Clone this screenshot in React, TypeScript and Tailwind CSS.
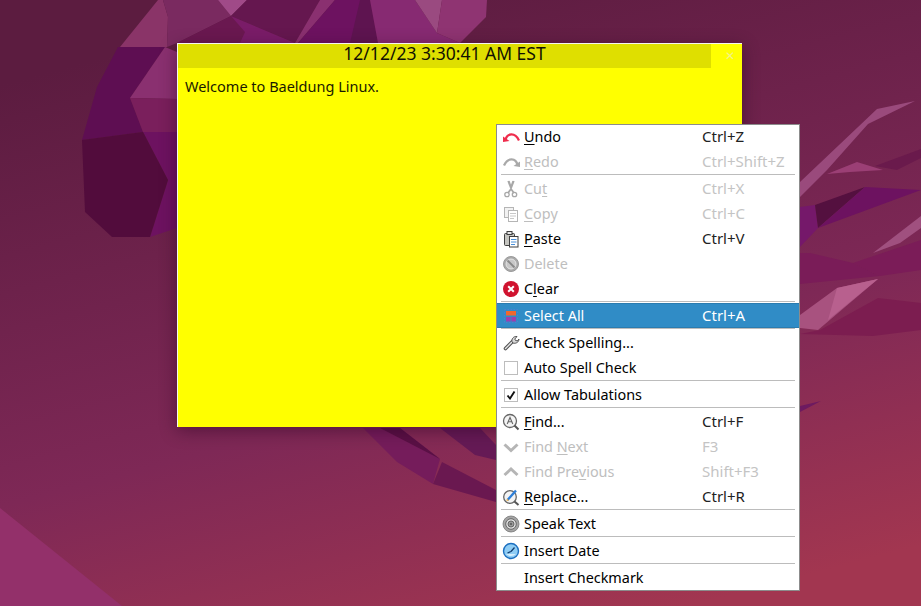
import type { ReactNode } from "react";

const polys: [string, string][] = [
  ["120,47 158,0 163,0 168,17 167,47", "#8a3468"],
  ["163,0 218,0 231,16 177,43 167,47 168,17", "#7a2a60"],
  ["218,0 247,0 231,16", "#a04a88"],
  ["247,0 320,0 295,43 231,16", "#65174f"],
  ["231,16 295,43 240,43", "#7a1c68"],
  ["231,16 245,32 240,43 177,43", "#6a1850"],
  ["320,0 335,0 298,43 295,43", "#8a3070"],
  ["335,0 370,0 378,43 298,43", "#6d1260"],
  ["360,0 370,0 378,43 350,43", "#5e1450"],
  ["370,0 415,0 437,33 460,43 378,43", "#872a72"],
  ["415,0 442,0 437,33", "#9a4a80"],
  ["442,0 487,0 486,17 460,43 437,33", "#8f3472"],
  ["118,47 165,47 130,98 143,132 82,140 97,87", "#5e0e52"],
  ["130,98 165,47 177,52 177,99", "#8a3070"],
  ["130,98 177,99 177,132 143,132", "#7a1f5c"],
  ["143,132 177,132 177,228 150,237 168,180", "#6d1260"],
  ["82,140 143,132 168,180 150,237 112,237 85,212", "#520c3c"],
  ["0,508 122,606 0,606", "#93306a"],
  ["363,428 400,428 440,459 433,484 397,462", "#751c5b"],
  ["380,428 400,428 440,459", "#5a1045"],
  ["433,484 442,462 496,490 496,502", "#6a1850"],
  ["440,428 480,428 496,445 496,460 475,455", "#651a55"],
  ["800,182 877,109 915,101 868,124 827,170 800,197", "#9a4a7c"],
  ["827,174 857,162 883,170 850,172", "#9b3f75"],
  ["875,166 921,149 921,158 897,170", "#6a1a4c"],
  ["800,207 815,205 818,228 800,247", "#75186a"],
  ["815,205 865,187 818,228", "#54103f"],
  ["865,187 921,190 818,228", "#6d1260"],
  ["810,253 853,263 880,276 800,284 800,253", "#7a1c58"],
  ["853,263 921,240 921,270 880,276", "#7b1c58"],
  ["873,253 921,216 921,228 900,243", "#a0507f"],
  ["800,334 873,336 921,330 921,303 878,298 820,330", "#7c1d50"],
  ["800,315 837,288 878,279 818,330 800,328", "#a8527f"],
  ["837,288 878,279 828,320", "#b8608e"],
  ["800,406 821,401 800,412", "#6d1a60"],
];

function Wallpaper() {
  return (
    <svg className="absolute inset-0" width="921" height="606" viewBox="0 0 921 606">
      <defs>
        <linearGradient id="wall" x1="0.35" y1="0" x2="0.75" y2="1">
          <stop offset="0" stopColor="#5c1c40" />
          <stop offset="0.6" stopColor="#7e2856" />
          <stop offset="1" stopColor="#a23650" />
        </linearGradient>
      </defs>
      <rect width="921" height="606" fill="url(#wall)" />
      {polys.map(([points, fill], i) => (
        <polygon key={i} points={points} fill={fill} />
      ))}
    </svg>
  );
}

const Ico = ({ children }: { children: ReactNode }) => (
  <svg width="18" height="18" viewBox="0 0 18 18" fill="none">
    {children}
  </svg>
);

const icons: Record<string, ReactNode> = {
  undo: (
    <Ico>
      <path d="M3.5 12C5 5 13 4 17 12.5" stroke="#ef2d4d" strokeWidth="2.3" />
      <path d="M1 8.5L1 14L7.5 13Z" fill="#ef2d4d" />
    </Ico>
  ),
  redo: (
    <Ico>
      <path d="M15.5 12C14 5 6 4 2 12.5" stroke="#a9a9a9" strokeWidth="2.3" />
      <path d="M18 8.5L18 14L11.5 13Z" fill="#a9a9a9" />
    </Ico>
  ),
  cut: (
    <Ico>
      <path d="M6 1L9 9L12 1M7 1L9.5 8M11 1L8.5 8" stroke="#a8a8a8" strokeWidth="1.3" />
      <path d="M9 9L6 13M9 9L12 13" stroke="#a8a8a8" strokeWidth="1.8" />
      <circle cx="5" cy="14.5" r="2.2" stroke="#a8a8a8" strokeWidth="1.3" />
      <circle cx="12.5" cy="14.5" r="2.2" stroke="#a8a8a8" strokeWidth="1.3" />
    </Ico>
  ),
  copy: (
    <Ico>
      <rect x="2.5" y="2.5" width="9" height="10" fill="#f2f2f2" stroke="#b5b5b5" />
      <rect x="6.5" y="5.5" width="9" height="11" fill="#fff" stroke="#b5b5b5" />
      <path d="M8 8.5H14M8 11H14M8 13.5H12" stroke="#c8c8c8" />
    </Ico>
  ),
  paste: (
    <Ico>
      <rect x="2.5" y="3.5" width="10" height="12" rx="1" fill="#c5c5c0" stroke="#3f3f3f" />
      <rect x="5" y="1.5" width="5" height="3" fill="#e8e8e8" stroke="#3f3f3f" />
      <rect x="7.5" y="6.5" width="8.5" height="10.5" fill="#fff" stroke="#3f3f3f" />
      <path d="M9 9.5H14.5M9 12H14.5M9 14.5H13" stroke="#4a90d9" />
    </Ico>
  ),
  del: (
    <Ico>
      <circle cx="9" cy="9" r="7.5" fill="#aaaaaa" stroke="#9a9a9a" />
      <circle cx="9" cy="9" r="5" fill="#c8c8c8" stroke="#eee" strokeWidth="0.8" />
      <path d="M5.5 5.5L12.5 12.5" stroke="#888" strokeWidth="1.8" />
    </Ico>
  ),
  clear: (
    <Ico>
      <circle cx="9" cy="9" r="8" fill="#d0132f" />
      <path d="M6.2 6.2L11.8 11.8M11.8 6.2L6.2 11.8" stroke="#fff" strokeWidth="2" />
    </Ico>
  ),
  selectAll: (
    <Ico>
      <rect x="2.5" y="2.5" width="13" height="13" stroke="#4d7fd0" strokeDasharray="1.5 1.5" />
      <rect x="4" y="4" width="10" height="4.5" fill="#f0682c" />
      <rect x="4" y="10" width="4.5" height="4.5" fill="#9a3fb0" />
      <rect x="9.5" y="10" width="4.5" height="4.5" fill="#9a3fb0" />
    </Ico>
  ),
  wrench: (
    <Ico>
      <path d="M3.5 14.5L11 7" stroke="#555" strokeWidth="3.6" strokeLinecap="round" />
      <path d="M3.5 14.5L11 7" stroke="#e6e6e6" strokeWidth="1.4" strokeLinecap="round" />
      <path d="M10 8C9.3 5 11.5 2 15 2.5L12.8 5L13.5 6.5L15.2 6.8L17 5C17 8 14 10 11 9Z" fill="#d8d8d8" stroke="#555" />
    </Ico>
  ),
  find: (
    <Ico>
      <circle cx="8" cy="8" r="6.5" fill="#f4f4f4" stroke="#666" strokeWidth="1.3" />
      <path d="M12.5 12.5L16.5 16.5" stroke="#555" strokeWidth="2" />
      <path d="M5.2 11L8 4.5L10.8 11M6.2 8.8H9.8" stroke="#666" strokeWidth="1.1" />
    </Ico>
  ),
  next: (
    <Ico>
      <path d="M2.5 6.5L9 12.5L15.5 6.5" stroke="#b5b5b5" strokeWidth="3" />
    </Ico>
  ),
  prev: (
    <Ico>
      <path d="M2.5 12L9 6L15.5 12" stroke="#b5b5b5" strokeWidth="3" />
    </Ico>
  ),
  replace: (
    <Ico>
      <circle cx="8" cy="9" r="6.3" fill="#f4f4f4" stroke="#666" strokeWidth="1.3" />
      <path d="M12.5 13.5L16.5 17" stroke="#555" strokeWidth="2" />
      <path d="M5.5 12L14 2.5" stroke="#2e7fd8" strokeWidth="2.4" />
      <path d="M5 10.5L7 12.5L4.5 13Z" fill="#f0b040" />
    </Ico>
  ),
  speak: (
    <Ico>
      <circle cx="9" cy="9" r="8" fill="#a5a5a5" stroke="#777" strokeWidth="0.8" />
      <circle cx="9" cy="9" r="5.3" fill="#ddd" stroke="#666" />
      <circle cx="9" cy="9" r="3" fill="#999" stroke="#666" />
      <circle cx="9" cy="9" r="1" fill="#555" />
    </Ico>
  ),
  date: (
    <Ico>
      <circle cx="9" cy="9" r="7.5" fill="#8fcdf5" stroke="#1c6fc0" strokeWidth="1.4" />
      <path d="M4 12A7 7 0 0 0 14 12Z" fill="#d6eefc" />
      <path d="M9 9.5L5.5 11M9 9.5L12.5 5.5" stroke="#123d70" strokeWidth="1.3" />
    </Ico>
  ),
  empty: <Ico>{null}</Ico>,
};

type Row = { icon: string; label: ReactNode; key?: string; off?: boolean; active?: boolean };

const U = ({ children }: { children: string }) => <span className="underline underline-offset-2">{children}</span>;

const groups: Row[][] = [
  [
    { icon: "undo", label: <><U>U</U>ndo</>, key: "Ctrl+Z" },
    { icon: "redo", label: <><U>R</U>edo</>, key: "Ctrl+Shift+Z", off: true },
  ],
  [
    { icon: "cut", label: <>Cu<U>t</U></>, key: "Ctrl+X", off: true },
    { icon: "copy", label: <><U>C</U>opy</>, key: "Ctrl+C", off: true },
    { icon: "paste", label: <><U>P</U>aste</>, key: "Ctrl+V" },
    { icon: "del", label: "Delete", off: true },
    { icon: "clear", label: <>C<U>l</U>ear</> },
  ],
  [{ icon: "selectAll", label: "Select All", key: "Ctrl+A", active: true }],
  [
    { icon: "wrench", label: "Check Spelling..." },
    { icon: "box", label: "Auto Spell Check" },
  ],
  [{ icon: "check", label: "Allow Tabulations" }],
  [
    { icon: "find", label: <><U>F</U>ind...</>, key: "Ctrl+F" },
    { icon: "next", label: <>Find <U>N</U>ext</>, key: "F3", off: true },
    { icon: "prev", label: <>Find Pre<U>v</U>ious</>, key: "Shift+F3", off: true },
    { icon: "replace", label: <><U>R</U>eplace...</>, key: "Ctrl+R" },
  ],
  [{ icon: "speak", label: "Speak Text" }],
  [{ icon: "date", label: "Insert Date" }],
  [{ icon: "empty", label: "Insert Checkmark" }],
];

function MenuRow({ row }: { row: Row }) {
  const tone = row.active
    ? "border-y border-[#2a7cb0] bg-[#308cc6] text-white"
    : row.off
      ? "text-[#bebebe]"
      : "text-[#000000]";
  return (
    <div className={`flex h-[25px] items-center pl-[5px] ${tone}`}>
      <div className="flex w-[22px] shrink-0 items-center justify-start">
        {row.icon === "box" || row.icon === "check" ? (
          <div className="ml-[2px] flex h-[14px] w-[14px] items-center justify-center border border-[#bdbdbd] bg-white">
            {row.icon === "check" && (
              <svg width="10" height="10" viewBox="0 0 10 10" fill="none">
                <path d="M1.5 5.5L4 8.5L8.5 1.5" stroke="#111" strokeWidth="1.9" />
              </svg>
            )}
          </div>
        ) : (
          icons[row.icon]
        )}
      </div>
      <div className="w-[178px] shrink-0 text-[14.4px]">{row.label}</div>
      <div className={`text-[15px] ${row.active ? "" : row.off ? "text-[#c4c4c4]" : "text-[#222222]"}`}>{row.key}</div>
    </div>
  );
}

export default function App() {
  return (
    <div className="relative h-[606px] w-[921px] overflow-hidden font-['Noto_Sans',sans-serif] text-[14px]">
      <Wallpaper />

      {/* note window */}
      <div className="absolute left-[177px] top-[43px] h-[384px] w-[565px] border-l border-t border-[#f4f4f0] bg-[#ffff00] shadow-[0_4px_16px_rgba(40,0,30,0.45)]">
        <div className="flex h-[24px] w-[533px] items-center justify-center bg-[#dfdf00] pb-[5px] text-[17.5px] text-[#111100]">
          12/12/23 3:30:41 AM EST
        </div>
        <span className="absolute right-[7px] top-[6px] text-[12px] leading-none text-[#f3f38a]">✕</span>
        <p className="ml-[7px] mt-[8px] text-[14.5px] text-[#1a1a00]">Welcome to Baeldung Linux.</p>
      </div>

      {/* context menu */}
      <div className="absolute left-[496px] top-[124px] w-[304px] border border-[#8c8c8c] bg-white">
        <div className="-mt-px">
          {groups.map((group, i) => (
            <div key={i}>
              {i > 0 && (
                <div className="h-[2px] px-[4px]">
                  <div className="h-px bg-[#bcbcbc]" />
                </div>
              )}
              {group.map((row, j) => (
                <MenuRow key={j} row={row} />
              ))}
            </div>
          ))}
        </div>
      </div>
    </div>
  );
}
